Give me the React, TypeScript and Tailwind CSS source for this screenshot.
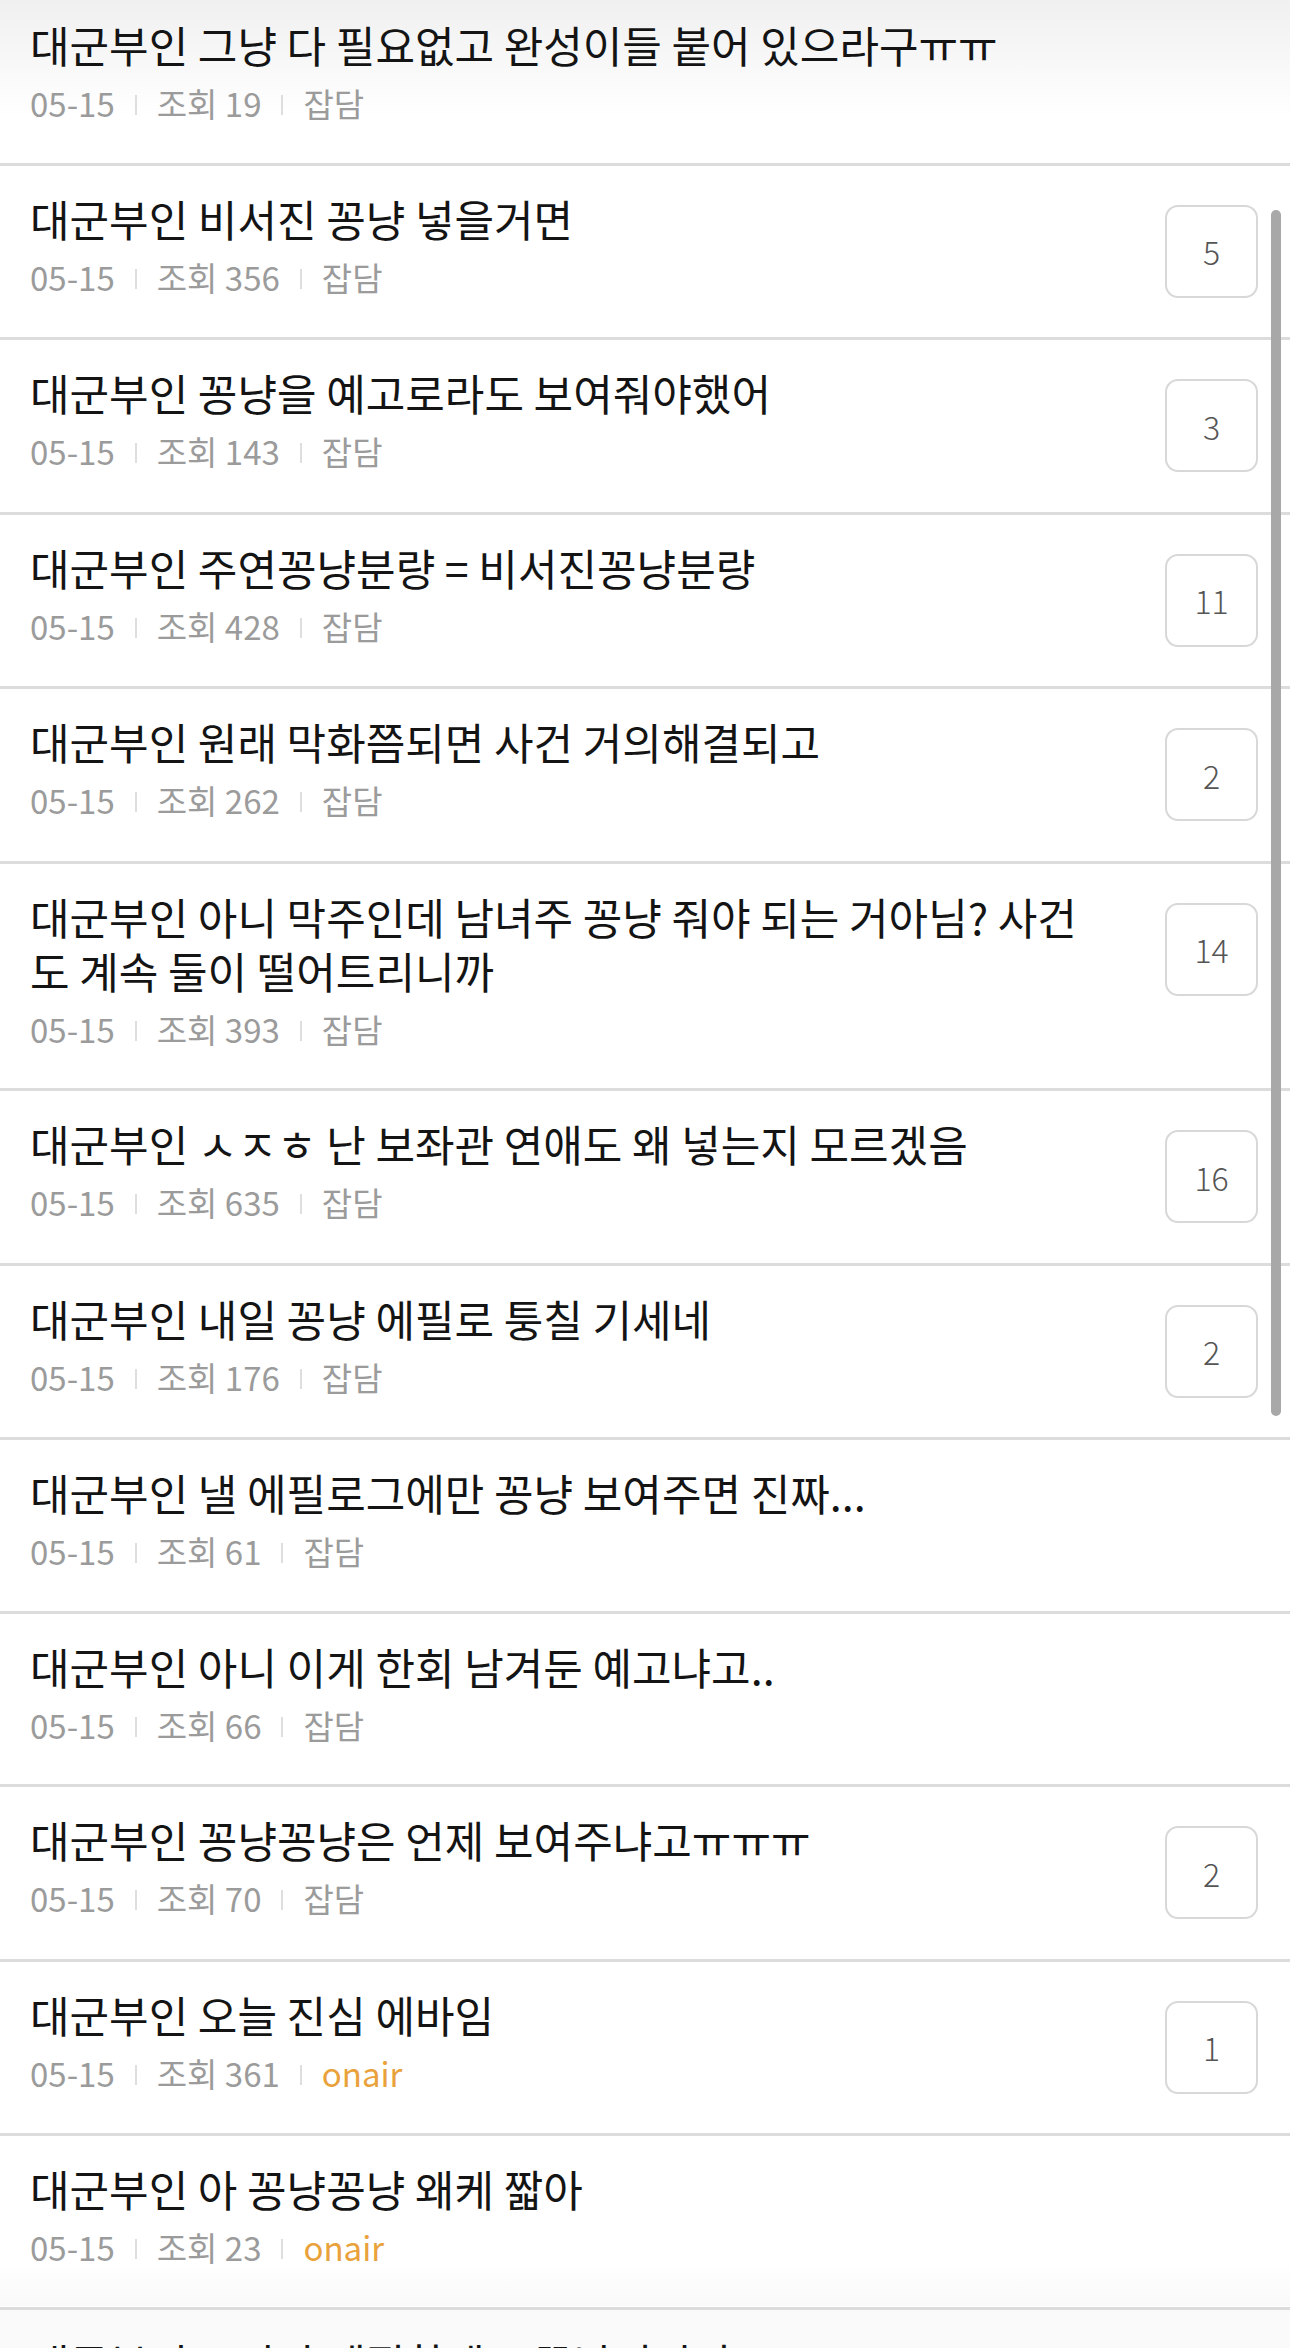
import React from "react";

type Row = {
  lines: string[];
  views: number;
  tag: string;
  comments?: number;
};

const rows: Row[] = [
  { lines: ["대군부인 그냥 다 필요없고 완성이들 붙어 있으라구ㅠㅠ"], views: 19, tag: "잡담" },
  { lines: ["대군부인 비서진 꽁냥 넣을거면"], views: 356, tag: "잡담", comments: 5 },
  { lines: ["대군부인 꽁냥을 예고로라도 보여줘야했어"], views: 143, tag: "잡담", comments: 3 },
  { lines: ["대군부인 주연꽁냥분량 = 비서진꽁냥분량"], views: 428, tag: "잡담", comments: 11 },
  { lines: ["대군부인 원래 막화쯤되면 사건 거의해결되고"], views: 262, tag: "잡담", comments: 2 },
  {
    lines: ["대군부인 아니 막주인데 남녀주 꽁냥 줘야 되는 거아님? 사건", "도 계속 둘이 떨어트리니까"],
    views: 393,
    tag: "잡담",
    comments: 14,
  },
  { lines: ["대군부인 ㅅㅈㅎ 난 보좌관 연애도 왜 넣는지 모르겠음"], views: 635, tag: "잡담", comments: 16 },
  { lines: ["대군부인 내일 꽁냥 에필로 퉁칠 기세네"], views: 176, tag: "잡담", comments: 2 },
  { lines: ["대군부인 낼 에필로그에만 꽁냥 보여주면 진짜..."], views: 61, tag: "잡담" },
  { lines: ["대군부인 아니 이게 한회 남겨둔 예고냐고.."], views: 66, tag: "잡담" },
  { lines: ["대군부인 꽁냥꽁냥은 언제 보여주냐고ㅠㅠㅠ"], views: 70, tag: "잡담", comments: 2 },
  { lines: ["대군부인 오늘 진심 에바임"], views: 361, tag: "onair", comments: 1 },
  { lines: ["대군부인 아 꽁냥꽁냥 왜케 짧아"], views: 23, tag: "onair" },
  { lines: ["대군부인 드라마 에필할때도 꽁냥거리지"], views: 12, tag: "잡담" },
];

const FONT = { fontFamily: '"Noto Sans CJK KR", "Noto Sans", sans-serif' };

function Bar() {
  return <span className="mx-[20px] mt-[4px] inline-block h-[20px] w-[2px] bg-[#dedede]" />;
}

function ListRow({ row, index }: { row: Row; index: number }) {
  const first = index === 0;
  const last = index === rows.length - 1;
  return (
    <div
      className={
        "flex items-start border-b-[3px] border-[#dcdcdc] pb-[39.5px] pl-[30px] pr-[32px] pt-[25px] " +
        (first
          ? "bg-[linear-gradient(to_bottom,#efefef,#ffffff_125px)]"
          : last
            ? "bg-[#fafafa]"
            : "bg-white")
      }
    >
      <div className="min-w-0 flex-1">
        {row.lines.map((l, i) => (
          <div key={i} className="h-[54px] whitespace-nowrap text-[43px] leading-[54px] text-[#141414]">
            {l}
          </div>
        ))}
        <div className="mt-[12px] flex h-[40px] items-center text-[33px] leading-[40px] text-[#9b9b9b]">
          <span>05-15</span>
          <Bar />
          <span>조회 {row.views}</span>
          <Bar />
          <span className={row.tag === "onair" ? "text-[#e9a23b]" : ""}>{row.tag}</span>
        </div>
      </div>
      {row.comments !== undefined && (
        <div className="ml-[40px] mt-[14px] flex h-[93px] w-[93px] shrink-0 items-center justify-center rounded-[13px] border-2 border-[#d8d8d8] bg-white text-[32px] font-light text-[#555555]">
          {row.comments}
        </div>
      )}
    </div>
  );
}

export default function App() {
  return (
    <div className="relative h-[2348px] w-[1290px] overflow-hidden bg-white" style={FONT}>
      <div className="-mt-[8px]">
        {rows.map((r, i) => (
          <ListRow key={i} row={r} index={i} />
        ))}
      </div>
      <div className="absolute left-[1271px] top-[210px] h-[1206px] w-[10px] rounded-full bg-[#a8a8a8]" />
      <div className="pointer-events-none absolute left-0 top-[2262px] h-[44px] w-full bg-[linear-gradient(to_bottom,rgba(0,0,0,0),rgba(0,0,0,0.025))]" />
    </div>
  );
}
